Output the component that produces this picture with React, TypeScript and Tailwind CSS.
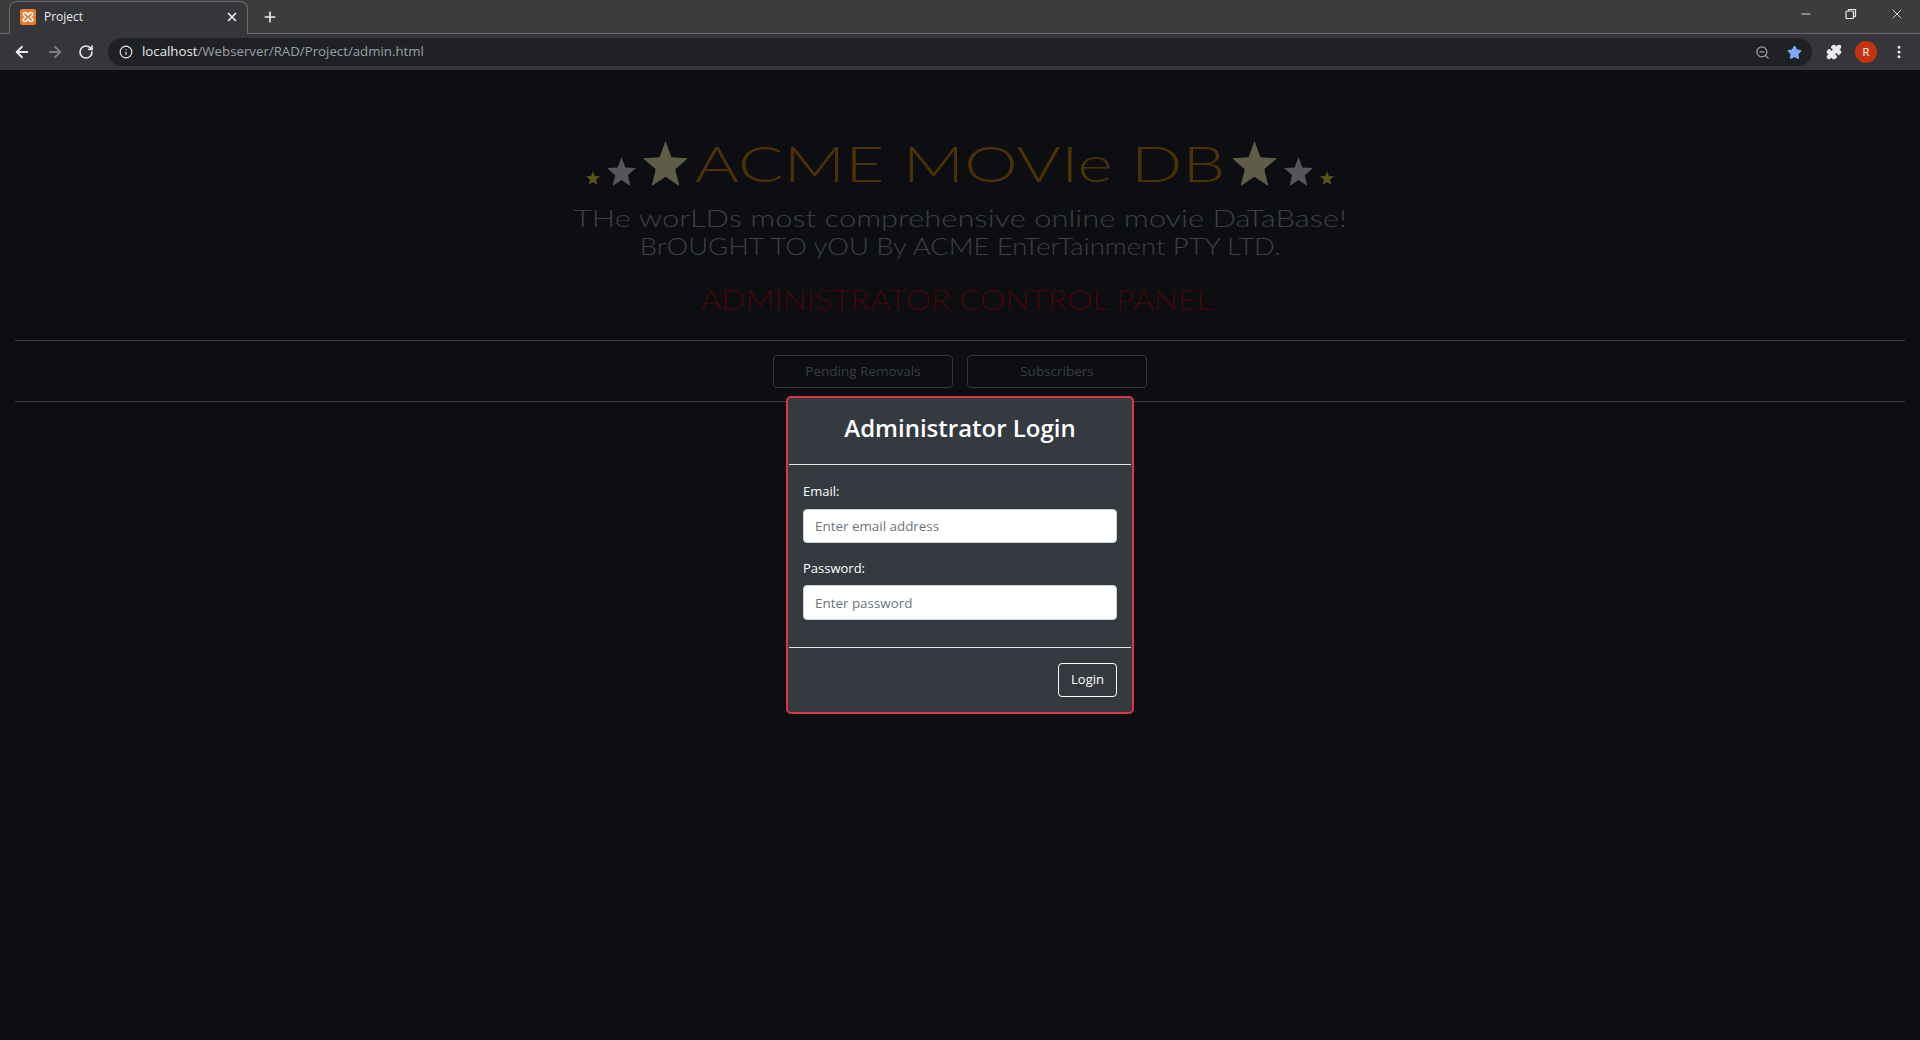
import { ArrowLeft, ArrowRight, RotateCw, Info, ZoomOut, Star, Puzzle, EllipsisVertical, Plus, X, Minus } from "lucide-react";

const UI_FONT = "font-['Open_Sans','Noto_Sans',sans-serif]";

const StarIcon = ({ size, color }: { size: number; color: string }) => (
  <svg width={size} height={size} viewBox="0 0 24 24" fill={color}>
    <polygon points="12,0 15.2,8.6 24,9.2 17.2,15 19.4,24 12,19 4.6,24 6.8,15 0,9.2 8.8,8.6" />
  </svg>
);

const TitleStars = ({ reverse }: { reverse?: boolean }) => (
  <div className={`flex items-end gap-[7px] ${reverse ? "flex-row-reverse" : ""}`}>
    <div className="mb-[1px]">
      <StarIcon size={14} color="#5a5510" />
    </div>
    <StarIcon size={29} color="#55565a" />
    <StarIcon size={45} color="#5f5c48" />
  </div>
);

const XamppIcon = () => (
  <svg width="16" height="16" viewBox="0 0 16 16">
    <rect width="16" height="16" rx="2" fill="#ec7a30" />
    <path
      d="M5 3.5 C3 3.5 2.5 5.5 4 6.5 L5.5 8 L4 9.5 C2.5 10.5 3 12.5 5 12.5 C6.5 12.5 7 11 8 10 C9 11 9.5 12.5 11 12.5 C13 12.5 13.5 10.5 12 9.5 L10.5 8 L12 6.5 C13.5 5.5 13 3.5 11 3.5 C9.5 3.5 9 5 8 6 C7 5 6.5 3.5 5 3.5 Z"
      fill="none"
      stroke="#fff"
      strokeWidth="1.6"
    />
  </svg>
);

const Browser = () => (
  <div className={`${UI_FONT} bg-[#35363a]`}>
    <div className="flex h-[34px] items-end border-b border-[#6a6b6d] bg-[#3c3c3c]">
      <div className="-mb-px ml-[9px] flex h-[33px] w-[239px] items-center rounded-t-lg border border-b-0 border-[#6a6b6d] bg-[#35363a] pb-[2px] pl-[10px] pr-[8px]">
        <XamppIcon />
        <span className="ml-[8px] flex-1 text-xs text-[#e8eaed]">Project</span>
        <X size={14} strokeWidth={3} className="text-[#e8eaed]" />
      </div>
      <div className="ml-[14px] flex h-[33px] items-center">
        <Plus size={16} strokeWidth={2.5} className="text-[#e8eaed]" />
      </div>
      <div className="flex-1" />
      <div className="flex h-[28px] items-center self-start text-[#e8eaed]">
        <Minus size={14} strokeWidth={1.5} className="mr-[32px]" />
        <svg width="12" height="12" viewBox="0 0 12 12" fill="none" stroke="currentColor" strokeWidth="1.2" className="mr-[32px]">
          <rect x="1" y="3" width="7.5" height="7.5" rx="1" />
          <path d="M3.5 3V1.5h7V8.5H8.5" />
        </svg>
        <X size={16} strokeWidth={1.3} className="mr-[15px]" />
      </div>
    </div>
    <div className="flex h-[36px] items-center">
      <ArrowLeft size={18} strokeWidth={2.5} className="ml-[13px] text-[#e8eaed]" />
      <ArrowRight size={18} strokeWidth={2.5} className="ml-[15px] text-[#7c7d80]" />
      <RotateCw size={16} strokeWidth={2.5} className="ml-[14px] text-[#e8eaed]" />
      <div className="ml-[14px] flex h-[28px] flex-1 items-center rounded-full bg-[#202124] pl-[11px] pr-[10px]">
        <Info size={14} strokeWidth={2} className="text-[#e8eaed]" />
        <span className="ml-[9px] text-[13.25px] text-[#e8eaed]">localhost</span>
        <span className="text-[13.25px] text-[#9aa0a6]">/Webserver/RAD/Project/admin.html</span>
        <div className="flex-1" />
        <ZoomOut size={15} className="text-[#a0a3a6]" />
        <Star size={15} fill="#7baaf7" className="ml-[17px] text-[#7baaf7]" />
      </div>
      <Puzzle size={16} fill="#e8eaed" className="ml-[14px] text-[#e8eaed]" />
      <div className="ml-[13px] flex size-[22px] items-center justify-center rounded-full bg-[#c5320f] text-[11px] text-white">
        R
      </div>
      <EllipsisVertical size={16} strokeWidth={2.5} className="ml-[14px] mr-[13px] text-[#e8eaed]" />
    </div>
  </div>
);

const App = () => {
  return (
    <div className="relative flex h-[1040px] w-[1920px] flex-col overflow-hidden bg-[#0c0e11]">
      <Browser />
      <main className="flex flex-1 flex-col px-[15px] pt-[71px]">
        <div className="flex flex-col items-center font-['Lato',sans-serif] font-light">
          <div className="flex h-[45px] items-end justify-center">
            <TitleStars />
            <h1 className="mx-[7px] w-[530px] origin-center scale-x-[1.38] whitespace-nowrap text-center text-[49px] leading-[45px] text-[#4d3208]">
              ACME MOVIe DB
            </h1>
            <TitleStars reverse />
          </div>
          <p className="mt-[18px] scale-x-[1.345] text-[23px] leading-[28px] text-[#3e4043]">
            THe worLDs most comprehensive online movie DaTaBase!
          </p>
          <p className="scale-x-[1.19] text-[23px] leading-[28px] text-[#3e4043]">
            BrOUGHT TO yOU By ACME EnTerTainment PTY LTD.
          </p>
          <p className="mt-[24px] scale-x-[1.18] pr-[6px] text-[27px] leading-[32px] text-[#420808]">
            ADMINISTRATOR CONTROL PANEL
          </p>
        </div>
        <hr className="mt-[24px] border-[#3a3c3f]" />
        <div className={`${UI_FONT} flex h-[60px] items-center justify-center gap-[14px] text-[13.5px] text-[#3b3e41]`}>
          <button className="h-[33px] w-[180px] rounded border border-[#35383b]">Pending Removals</button>
          <button className="h-[33px] w-[180px] rounded border border-[#35383b]">Subscribers</button>
        </div>
        <hr className="border-[#3a3c3f]" />
      </main>

      {/* login modal sits over the dimmed page */}
      <div className={`${UI_FONT} absolute left-[786px] top-[396px] w-[348px] rounded-[5px] border-2 border-[#dc3545] bg-[#343a40] text-white`}>
        <div className="mx-px flex h-[67px] items-center justify-center border-b border-[#dee2e6] pb-[6px]">
          <h2 className="text-2xl font-semibold">Administrator Login</h2>
        </div>
        <div className="flex h-[182px] flex-col px-[15px] pt-[16px] text-[13px]">
          <label className="leading-[20px]">Email:</label>
          <input
            placeholder="Enter email address"
            className="mt-[8px] h-[34px] rounded border border-[#ced4da] bg-white px-[11px] text-[13.4px] text-black placeholder:text-[#6c757d]"
          />
          <label className="mt-[15px] leading-[20px]">Password:</label>
          <input
            placeholder="Enter password"
            className="mt-[7px] h-[35px] rounded border border-[#ced4da] bg-white px-[11px] text-[13.4px] text-black placeholder:text-[#6c757d]"
          />
        </div>
        <div className="mx-px flex h-[65px] items-center justify-end border-t border-[#dee2e6] px-[14px]">
          <button className="h-[34px] w-[59px] rounded border border-white text-[13px]">Login</button>
        </div>
      </div>
    </div>
  );
};

export default App;
